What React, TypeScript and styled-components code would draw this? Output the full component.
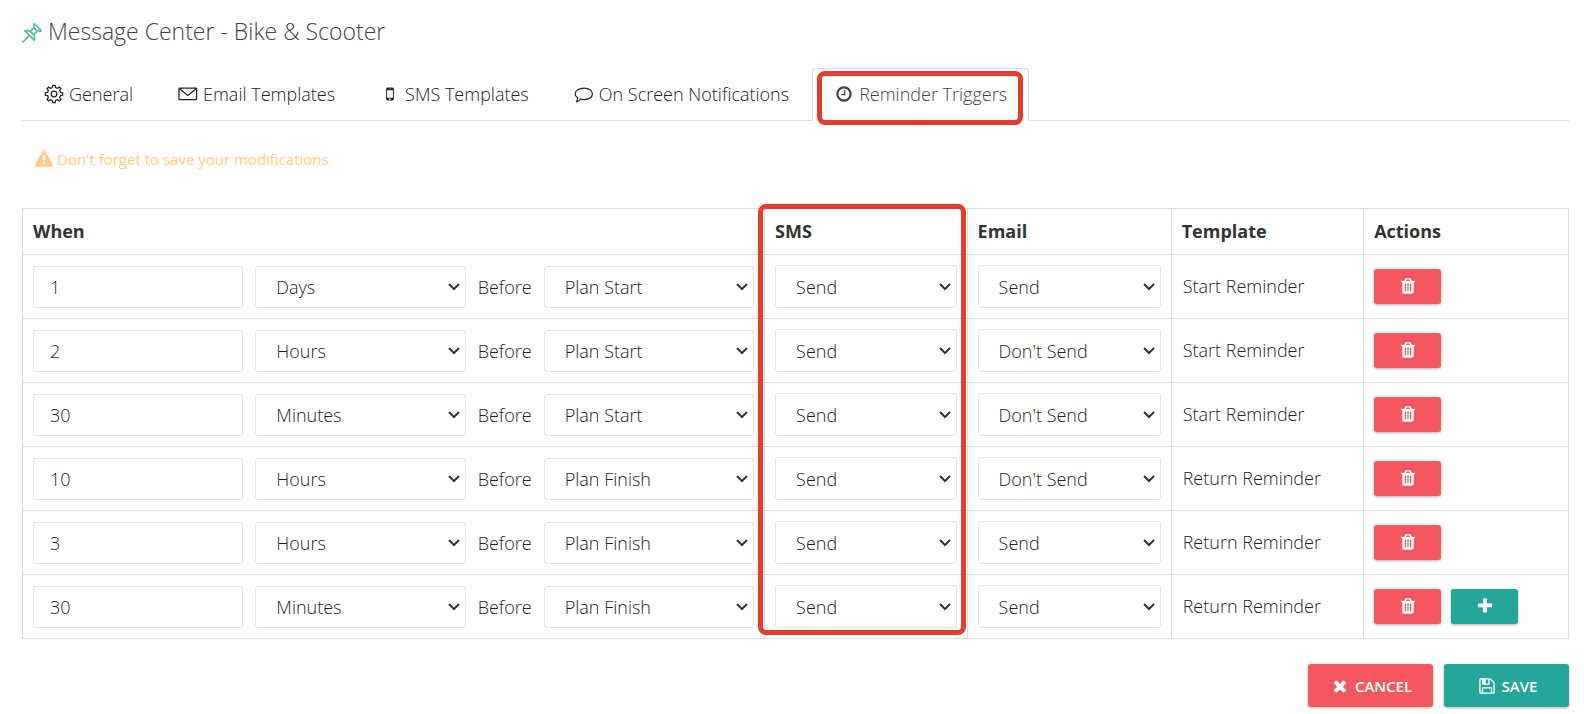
import React from "react";
import styled, { createGlobalStyle, css } from "styled-components";
import { SlPin } from "react-icons/sl";

const GlobalStyle = createGlobalStyle`
  *, *::before, *::after { box-sizing: border-box; }
  body {
    margin: 0;
    background: #fff;
    color: #222;
    font-family: "Open Sans", "Noto Sans", sans-serif;
    font-size: 18px;
    font-weight: 300;
    line-height: 24px;
  }
  input, select, button { font: inherit; color: inherit; }
`;

const glyphs = {
  trash:
    "M704 1376v-704q0-14-9-23t-23-9h-64q-14 0-23 9t-9 23v704q0 14 9 23t23 9h64q14 0 23-9t9-23zm256 0v-704q0-14-9-23t-23-9h-64q-14 0-23 9t-9 23v704q0 14 9 23t23 9h64q14 0 23-9t9-23zm256 0v-704q0-14-9-23t-23-9h-64q-14 0-23 9t-9 23v704q0 14 9 23t23 9h64q14 0 23-9t9-23zm-544-992h448l-48-117q-7-9-17-11h-317q-10 2-17 11zm928 32v64q0 14-9 23t-23 9h-96v948q0 83-47 143.5t-113 60.5h-832q-66 0-113-58.5t-47-141.5v-952h-96q-14 0-23-9t-9-23v-64q0-14 9-23t23-9h309l70-167q15-37 54-63t79-26h320q40 0 79 26t54 63l70 167h309q14 0 23 9t9 23z",
  plus: "M1600 736v192q0 40-28 68t-68 28h-416v416q0 40-28 68t-68 28h-192q-40 0-68-28t-28-68v-416h-416q-40 0-68-28t-28-68v-192q0-40 28-68t68-28h416v-416q0-40 28-68t68-28h192q40 0 68 28t28 68v416h416q40 0 68 28t28 68z",
  close:
    "M1490 1322q0 40-28 68l-136 136q-28 28-68 28t-68-28l-294-294-294 294q-28 28-68 28t-68-28l-136-136q-28-28-28-68t28-68l294-294-294-294q-28-28-28-68t28-68l136-136q28-28 68-28t68 28l294 294 294-294q28-28 68-28t68 28l136 136q28 28 28 68t-28 68l-294 294 294 294q28 28 28 68z",
  clock:
    "M1024 544v448q0 14-9 23t-23 9h-320q-14 0-23-9t-9-23v-64q0-14 9-23t23-9h224v-352q0-14 9-23t23-9h64q14 0 23 9t9 23zm416 352q0-148-73-273t-198-198-273-73-273 73-198 198-73 273 73 273 198 198 273 73 273-73 198-198 73-273zm224 0q0 209-103 385.5t-279.5 279.5-385.5 103-385.5-103-279.5-279.5-103-385.5 103-385.5 279.5-279.5 385.5-103 385.5 103 279.5 279.5 103 385.5z",
  warning:
    "M1024 1375v-190q0-14-9.5-23.5t-22.5-9.5h-192q-13 0-22.5 9.5t-9.5 23.5v190q0 14 9.5 23.5t22.5 9.5h192q13 0 22.5-9.5t9.5-23.5zm-2-374l18-459q0-12-10-19-13-11-24-11h-220q-11 0-24 11-10 7-10 21l17 457q0 10 10 16.5t24 6.5h185q14 0 23.5-6.5t10.5-16.5zm-14-934l768 1408q35 63-2 126-17 29-46.5 46t-63.5 17h-1536q-34 0-63.5-17t-46.5-46q-37-63-2-126l768-1408q17-31 47-49t65-18 65 18 47 49z",
  save: "M512 1536h768v-384h-768v384zm896 0h128v-896q0-14-10-38.5t-20-34.5l-281-281q-10-10-34-20t-39-10v416q0 40-28 68t-68 28h-576q-40 0-68-28t-28-68v-416h-128v1280h128v-416q0-40 28-68t68-28h832q40 0 68 28t28 68v416zm-384-928v-320q0-13-9.5-22.5t-22.5-9.5h-192q-13 0-22.5 9.5t-9.5 22.5v320q0 13 9.5 22.5t22.5 9.5h192q13 0 22.5-9.5t9.5-22.5zm640 32v928q0 40-28 68t-68 28h-1344q-40 0-68-28t-28-68v-1344q0-40 28-68t68-28h928q40 0 88 20t76 48l280 280q28 28 48 76t20 88z",
  mobile:
    "M976 1408q0-33-23.5-56.5t-56.5-23.5-56.5 23.5-23.5 56.5 23.5 56.5 56.5 23.5 56.5-23.5 23.5-56.5zm208-160v-704q0-13-9.5-22.5t-22.5-9.5h-512q-13 0-22.5 9.5t-9.5 22.5v704q0 13 9.5 22.5t22.5 9.5h512q13 0 22.5-9.5t9.5-22.5zm-192-848q0-16-16-16h-160q-16 0-16 16t16 16h160q16 0 16-16zm288-16v1024q0 52-38 90t-90 38h-512q-52 0-90-38t-38-90v-1024q0-52 38-90t90-38h512q52 0 90 38t38 90z",
};

function Glyph({ name, size = 18 }: { name: keyof typeof glyphs; size?: number }) {
  return (
    <svg width={size} height={size} viewBox="0 0 1792 1792" fill="currentColor" aria-hidden="true">
      <path d={glyphs[name]} />
    </svg>
  );
}

const gearOutline = Array.from({ length: 8 }, (_, tooth) =>
  [
    [-13, 6.7],
    [-8, 8.8],
    [8, 8.8],
    [13, 6.7],
  ].map(([offset, radius]) => {
    const angle = ((tooth * 45 + offset) * Math.PI) / 180;
    return `${(10 + radius * Math.sin(angle)).toFixed(2)},${(10 - radius * Math.cos(angle)).toFixed(2)}`;
  }),
)
  .flat()
  .join(" ");

const LineIcon = styled.svg.attrs({ width: 20, height: 20, viewBox: "0 0 20 20", "aria-hidden": true })`
  fill: none;
  stroke: currentColor;
  stroke-width: 1.25;
  stroke-linejoin: round;
  stroke-linecap: round;
`;

const Page = styled.main`
  padding: 13px 15px 7px 22px;
`;

const Title = styled.h1`
  display: flex;
  align-items: center;
  gap: 6px;
  margin: 0 0 19px;
  color: #444;
  font-size: 23px;
  font-weight: 300;
  line-height: 36px;
`;

const PinIcon = styled(SlPin)`
  margin-top: 4px;
  color: #4db6ac;
  stroke: currentColor;
  stroke-width: 24px;
`;

const Tabs = styled.nav`
  display: flex;
  gap: 1px;
  border-bottom: 1px solid #ddd;
`;

const Tab = styled.a<{ $active?: boolean }>`
  position: relative;
  display: flex;
  align-items: center;
  gap: 5px;
  height: 53px;
  margin-bottom: -1px;
  padding: 0 21px 2px;
  border: 1px solid transparent;
  border-radius: 3px 3px 0 0;
  color: #222;
  text-decoration: none;
  white-space: nowrap;
  ${(p) =>
    p.$active &&
    css`
      color: #444;
      background: #fff;
      border-color: #ddd #ddd #fff;
    `}
`;

const TabIcon = styled.span`
  display: flex;
  justify-content: center;
  width: 20px;
`;

const frame = css`
  position: absolute;
  border: 5px solid #e53c30;
  border-radius: 8px;
  pointer-events: none;
`;

const TabFrame = styled.span`
  ${frame}
  inset: 2px 5px -5px 4px;
`;

const ColumnFrame = styled.div`
  ${frame}
  top: -4px;
  bottom: 4px;
  left: calc(48% - 7px);
  width: calc(13% + 7px);
`;

const Notice = styled.p`
  display: flex;
  align-items: center;
  gap: 4px;
  margin: 26px 13px 37px;
  color: #ffcc80;
  font-size: 15px;
  font-weight: 400;
`;

const TableWrap = styled.div`
  position: relative;
`;

const Table = styled.table`
  width: 100%;
  table-layout: fixed;
  border-collapse: collapse;
`;

const Col = styled.col<{ $width?: string }>`
  width: ${(p) => p.$width ?? "auto"};
`;

const HeadCell = styled.th`
  height: 46px;
  padding: 0 10px 2px;
  border: 1px solid #ddd;
  color: #333;
  font-weight: 700;
  text-align: left;
`;

const Cell = styled.td`
  height: 64px;
  padding: 10px;
  border: 1px solid #ddd;
`;

const TextCell = styled(Cell)`
  padding: 9px 11px 11px;
`;

const WhenFields = styled.div`
  display: grid;
  grid-template-columns: minmax(0, 1fr) minmax(0, 1fr) auto minmax(0, 1fr);
  align-items: center;
  gap: 12px;
  padding-top: 1px;
`;

const control = css`
  display: block;
  width: 100%;
  border: 1px solid #e3e3e3;
  border-radius: 3px;
  background: #fff;
`;

const Amount = styled.input`
  ${control}
  height: 42px;
  padding: 0 16px;
`;

const chevron =
  "data:image/svg+xml,%3Csvg xmlns='http://www.w3.org/2000/svg' width='12' height='8' fill='none' stroke='%23333' stroke-width='2'%3E%3Cpath d='M1 1l5 5 5-5'/%3E%3C/svg%3E";

const Choice = styled.select<{ $inline?: boolean }>`
  ${control}
  appearance: none;
  height: ${(p) => (p.$inline ? 42 : 43)}px;
  padding: 0 24px 0 20px;
  background: #fff url("${chevron}") no-repeat right 5px center;
`;

const tones = { danger: "#f5575f", success: "#26a69a" };

const Button = styled.button<{ $tone: keyof typeof tones }>`
  display: flex;
  align-items: center;
  justify-content: center;
  border: 0;
  border-radius: 3px;
  background: ${(p) => tones[p.$tone]};
  color: #fff;
  box-shadow: 0 1px 3px rgba(0, 0, 0, 0.3);
  cursor: pointer;
`;

const IconButton = styled(Button)`
  width: 67px;
  height: 35px;
  padding: 0 0 2px;
`;

const TextButton = styled(Button)`
  gap: 6px;
  width: 125px;
  height: 43px;
  padding: 0 0 0 2px;
  font-size: 15px;
  font-weight: 600;
  text-transform: uppercase;
`;

const RowActions = styled.div`
  display: flex;
  gap: 10px;
`;

const Footer = styled.footer`
  display: flex;
  justify-content: flex-end;
  gap: 11px;
  margin-top: 25px;
`;

const units = ["Minutes", "Hours", "Days"];
const anchors = ["Plan Start", "Plan Finish"];
const sending = ["Send", "Don't Send"];

const triggers = [
  { amount: "1", unit: "Days", anchor: "Plan Start", sms: "Send", email: "Send", template: "Start Reminder" },
  { amount: "2", unit: "Hours", anchor: "Plan Start", sms: "Send", email: "Don't Send", template: "Start Reminder" },
  { amount: "30", unit: "Minutes", anchor: "Plan Start", sms: "Send", email: "Don't Send", template: "Start Reminder" },
  { amount: "10", unit: "Hours", anchor: "Plan Finish", sms: "Send", email: "Don't Send", template: "Return Reminder" },
  { amount: "3", unit: "Hours", anchor: "Plan Finish", sms: "Send", email: "Send", template: "Return Reminder" },
  { amount: "30", unit: "Minutes", anchor: "Plan Finish", sms: "Send", email: "Send", template: "Return Reminder" },
];

function Picker(props: { label: string; options: string[]; value: string; inline?: boolean }) {
  return (
    <Choice aria-label={props.label} defaultValue={props.value} $inline={props.inline}>
      {props.options.map((o) => (
        <option key={o}>{o}</option>
      ))}
    </Choice>
  );
}

export default function App() {
  return (
    <>
      <GlobalStyle />
      <Page>
        <Title>
          <PinIcon size={20} aria-hidden="true" />
          Message Center - Bike &amp; Scooter
        </Title>
        <Tabs>
          <Tab href="#general">
            <TabIcon>
              <LineIcon>
                <polygon points={gearOutline} />
                <circle cx="10" cy="10" r="2.8" />
              </LineIcon>
            </TabIcon>
            General
          </Tab>
          <Tab href="#email">
            <TabIcon>
              <LineIcon>
                <rect x="1" y="4" width="17.6" height="11.6" rx="0.6" />
                <path d="M1.6 4.8L9.8 11.4L18 4.8" />
              </LineIcon>
            </TabIcon>
            Email Templates
          </Tab>
          <Tab href="#sms">
            <TabIcon><Glyph name="mobile" /></TabIcon>
            SMS Templates
          </Tab>
          <Tab href="#screen">
            <TabIcon>
              <LineIcon>
                <path d="M10 4.2C14.8 4.2 18.4 6.6 18.4 9.9S14.8 15.5 10 15.5C8.8 15.5 7.7 15.3 6.7 15C5.7 16.5 4.2 17.5 2.5 17.8C3.4 16.6 3.7 15.3 3.6 13.8C2 12.8 1.1 11.4 1.1 9.9C1.1 6.6 5.2 4.2 10 4.2Z" />
              </LineIcon>
            </TabIcon>
            On Screen Notifications
          </Tab>
          <Tab href="#reminders" $active aria-current="page">
            <TabIcon><Glyph name="clock" /></TabIcon>
            Reminder Triggers
            <TabFrame />
          </Tab>
        </Tabs>
        <Notice>
          <Glyph name="warning" />
          Don't forget to save your modifications
        </Notice>
        <TableWrap>
          <Table>
            <colgroup>
              <Col $width="48%" />
              <Col $width="13.1%" />
              <Col $width="13.2%" />
              <Col $width="12.45%" />
              <Col />
            </colgroup>
            <thead>
              <tr>
                <HeadCell scope="col">When</HeadCell>
                <HeadCell scope="col">SMS</HeadCell>
                <HeadCell scope="col">Email</HeadCell>
                <HeadCell scope="col">Template</HeadCell>
                <HeadCell scope="col">Actions</HeadCell>
              </tr>
            </thead>
            <tbody>
              {triggers.map((t, i) => (
                <tr key={i}>
                  <Cell>
                    <WhenFields>
                      <Amount type="text" aria-label="Amount" defaultValue={t.amount} />
                      <Picker inline label="Unit" options={units} value={t.unit} />
                      <span>Before</span>
                      <Picker inline label="Event" options={anchors} value={t.anchor} />
                    </WhenFields>
                  </Cell>
                  <Cell><Picker label="SMS" options={sending} value={t.sms} /></Cell>
                  <Cell><Picker label="Email" options={sending} value={t.email} /></Cell>
                  <TextCell>{t.template}</TextCell>
                  <Cell>
                    <RowActions>
                      <IconButton type="button" $tone="danger" aria-label="Delete trigger">
                        <Glyph name="trash" />
                      </IconButton>
                      {i === triggers.length - 1 && (
                        <IconButton type="button" $tone="success" aria-label="Add trigger">
                          <Glyph name="plus" />
                        </IconButton>
                      )}
                    </RowActions>
                  </Cell>
                </tr>
              ))}
            </tbody>
          </Table>
          <ColumnFrame />
        </TableWrap>
        <Footer>
          <TextButton type="button" $tone="danger">
            <Glyph name="close" />
            Cancel
          </TextButton>
          <TextButton type="button" $tone="success">
            <Glyph name="save" />
            Save
          </TextButton>
        </Footer>
      </Page>
    </>
  );
}
